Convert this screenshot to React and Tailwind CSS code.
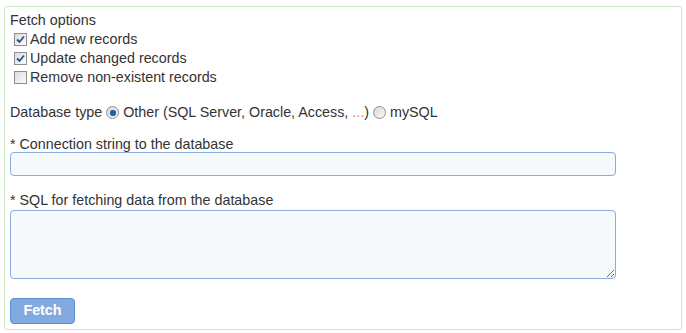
import { useState } from 'react';

function CheckBox({ checked, onChange, label }) {
    return (
        <label className="flex items-center h-[19px] pl-[4px] cursor-pointer">
            <span
                onClick={onChange}
                className="w-[13px] h-[13px] border border-[#8f8f8f] bg-gradient-to-br from-[#dcdcdc] to-[#fbfbfb] flex items-center justify-center mr-[3px]"
            >
                {checked && (
                    <svg width="9" height="9" viewBox="0 0 9 9">
                        <path d="M1 4.5 L3.5 7 L8 1.5" fill="none" stroke="#2c4e8a" strokeWidth="1.8" />
                    </svg>
                )}
            </span>
            <span>{label}</span>
        </label>
    );
}

function Radio({ checked, onChange }) {
    return (
        <span
            onClick={onChange}
            className="inline-flex w-[13px] h-[13px] rounded-full border border-[#8f8f8f] bg-gradient-to-br from-[#d8d8d8] to-[#fafafa] items-center justify-center mx-[4px] cursor-pointer"
        >
            {checked && <span className="w-[6px] h-[6px] rounded-full bg-[#1e5fa8] shadow-[0_0_1px_#5aa0e8]" />}
        </span>
    );
}

export default function App() {
    const [opts, setOpts] = useState({ add: true, update: true, remove: false });
    const [dbType, setDbType] = useState('other');

    const toggle = (key) => setOpts({ ...opts, [key]: !opts[key] });

    return (
        <div className="font-['Liberation_Sans',Arial,sans-serif] text-[14.3px] text-[#333] bg-white min-h-[333px] pt-[6px] pl-[4px]">
            <div className="w-[678px] border border-[#cde8c8] rounded-[3px] px-[5px] pt-[4px] pb-[5px]">
                <div className="h-[19px] leading-[19px]">Fetch options</div>
                <CheckBox checked={opts.add} onChange={() => toggle('add')} label="Add new records" />
                <CheckBox checked={opts.update} onChange={() => toggle('update')} label="Update changed records" />
                <CheckBox checked={opts.remove} onChange={() => toggle('remove')} label="Remove non-existent records" />

                <div className="flex items-center h-[19px] mt-[16px]">
                    <span>Database type</span>
                    <Radio checked={dbType === 'other'} onChange={() => setDbType('other')} />
                    <span>
                        Other (SQL Server, Oracle, Access, <span className="text-[#e08a1e]">...</span>)
                    </span>
                    <Radio checked={dbType === 'mysql'} onChange={() => setDbType('mysql')} />
                    <span>mySQL</span>
                </div>

                <div className="mt-[14px] h-[16px] leading-[16px]">* Connection string to the database</div>
                <input
                    type="text"
                    className="block w-[606px] h-[24px] bg-[#f5f9fc] border border-[#88acdf] rounded-[4px] outline-none px-1"
                />

                <div className="mt-[16px] h-[18px] leading-[16px]">* SQL for fetching data from the database</div>
                <textarea className="block w-[606px] h-[69px] bg-[#f5f9fc] border border-[#88acdf] rounded-[4px] outline-none px-1" />

                <button className="mt-[19px] w-[65px] h-[26px] bg-[#82aae0] border border-[#5c8fd6] rounded-[4px] text-white font-bold text-[14.3px]">
                    Fetch
                </button>
            </div>
        </div>
    );
}
